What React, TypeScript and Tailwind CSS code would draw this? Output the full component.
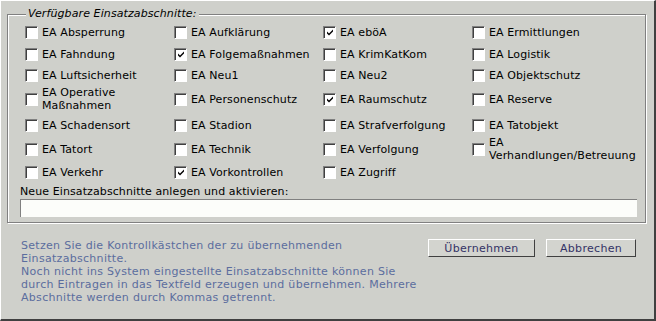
import React from 'react';

const items: { label: string; checked?: boolean }[] = [
  { label: 'EA Absperrung' },
  { label: 'EA Aufklärung' },
  { label: 'EA eböA', checked: true },
  { label: 'EA Ermittlungen' },
  { label: 'EA Fahndung' },
  { label: 'EA Folgemaßnahmen', checked: true },
  { label: 'EA KrimKatKom' },
  { label: 'EA Logistik' },
  { label: 'EA Luftsicherheit' },
  { label: 'EA Neu1' },
  { label: 'EA Neu2' },
  { label: 'EA Objektschutz' },
  { label: 'EA Operative\nMaßnahmen' },
  { label: 'EA Personenschutz' },
  { label: 'EA Raumschutz', checked: true },
  { label: 'EA Reserve' },
  { label: 'EA Schadensort' },
  { label: 'EA Stadion' },
  { label: 'EA Strafverfolgung' },
  { label: 'EA Tatobjekt' },
  { label: 'EA Tatort' },
  { label: 'EA Technik' },
  { label: 'EA Verfolgung' },
  { label: 'EA\nVerhandlungen/Betreuung' },
  { label: 'EA Verkehr' },
  { label: 'EA Vorkontrollen', checked: true },
  { label: 'EA Zugriff' },
];

const CheckBox = ({ checked }: { checked?: boolean }) => (
  <div className="w-[13px] h-[13px] shrink-0 bg-white border border-t-[#808080] border-l-[#808080] border-b-white border-r-white shadow-[inset_1px_1px_0_#404040] flex items-center justify-center">
    {checked && (
      <svg width="9" height="9" viewBox="0 0 9 9" className="mt-[1px] ml-[1px]">
        <path d="M1 3.5 L3 5.5 L7 1.5 L7 3.5 L3 7.5 L1 5.5 Z" fill="#000" />
      </svg>
    )}
  </div>
);

const Button = ({ children, w }: { children: React.ReactNode; w: string }) => (
  <button
    className={`${w} h-[18px] bg-[#d3d4cf] border border-t-white border-l-white border-r-[#404040] border-b-[#404040] text-[#333366] text-[11px] leading-none tracking-[0.3px] flex items-center justify-center`}
  >
    {children}
  </button>
);

export default function App() {
  return (
    <div
      className="w-[656px] h-[321px] bg-[#cfd0cb] border-t border-l border-white border-r-2 border-b-2 border-r-[#404040] border-b-[#404040] text-[11px] text-black tracking-[0.1px]"
      style={{ fontFamily: '"DejaVu Sans", Verdana, sans-serif' }}
    >
      <div className="relative ml-[6px] mt-[13px] w-[639px] h-[209px] border border-[#808080] shadow-[1px_1px_0_#fff,inset_1px_1px_0_#fff] pl-[12px] pt-[6px]">
        <span className="absolute left-[18px] top-[-8px] px-[2px] bg-[#cfd0cb] italic leading-[14px]">
          Verfügbare Einsatzabschnitte:
        </span>
        <div className="ml-[5px] grid grid-cols-[149px_149px_149px_149px] grid-rows-[22px_22px_21px_26px_26px_22px_24px]">
          {items.map((it) => (
            <div key={it.label} className="flex items-center gap-[4px]">
              <CheckBox checked={it.checked} />
              <span className="whitespace-pre-line leading-[13px]">{it.label}</span>
            </div>
          ))}
        </div>
        <div className="mt-[1px] leading-[13px]">Neue Einsatzabschnitte anlegen und aktivieren:</div>
        <div className="mt-[1px] w-[617px] h-[18px] bg-[#fcfdfa] border-t border-l border-[#808080]" />
      </div>
      <div className="flex justify-between pl-[20px] pr-[18px] pt-[16px]">
        <div className="text-[#5b6d9e] leading-[13px] tracking-[0.3px]">
          Setzen Sie die Kontrollkästchen der zu übernehmenden
          <br />
          Einsatzabschnitte.
          <br />
          Noch nicht ins System eingestellte Einsatzabschnitte können Sie
          <br />
          durch Eintragen in das Textfeld erzeugen und übernehmen. Mehrere
          <br />
          Abschnitte werden durch Kommas getrennt.
        </div>
        <div className="flex gap-[11px]">
          <Button w="w-[107px]">Übernehmen</Button>
          <Button w="w-[90px]">Abbrechen</Button>
        </div>
      </div>
    </div>
  );
}
